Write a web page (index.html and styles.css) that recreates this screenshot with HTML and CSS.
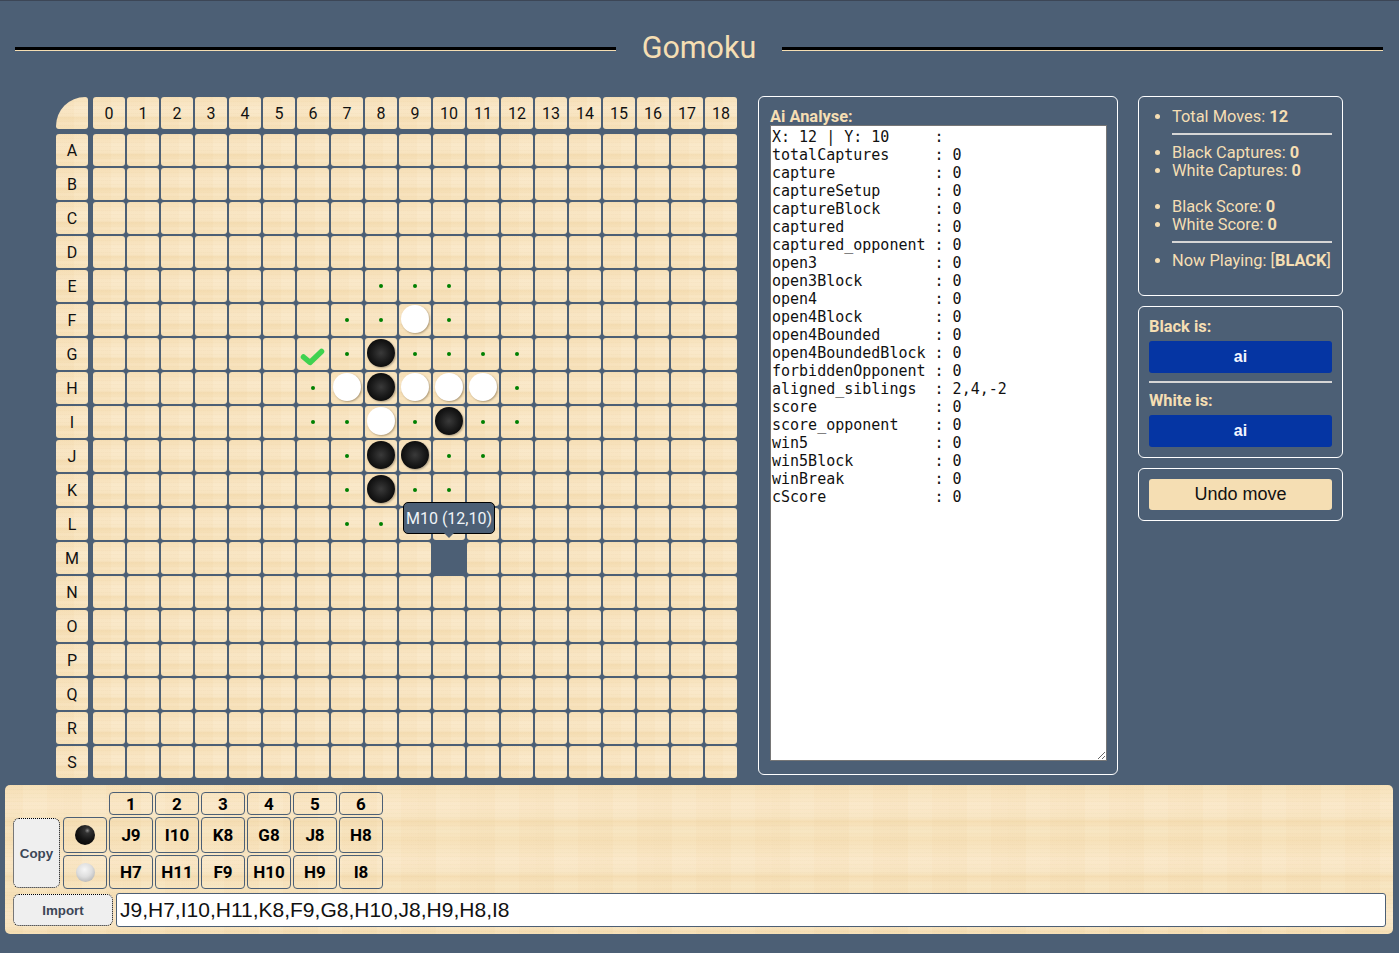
FILE: index.html
```html
<!DOCTYPE html>
<html lang="en">
<head>
    <meta charset="UTF-8">
    <meta name="viewport" content="width=device-width, initial-scale=1.0">
    <title>Gomoku</title>
    <link rel="stylesheet" href="styles.css">
</head>
<body>
    <header class="title-bar">
        <div class="title-line"></div>
        <h1>Gomoku</h1>
        <div class="title-line"></div>
    </header>

    <main class="game">
        <div class="board" id="board"></div>

        <section class="panel analyse">
            <label for="analyse-text">Ai Analyse:</label>
            <textarea id="analyse-text" spellcheck="false">X: 12 | Y: 10     :
totalCaptures     : 0
capture           : 0
captureSetup      : 0
captureBlock      : 0
captured          : 0
captured_opponent : 0
open3             : 0
open3Block        : 0
open4             : 0
open4Block        : 0
open4Bounded      : 0
open4BoundedBlock : 0
forbiddenOpponent : 0
aligned_siblings  : 2,4,-2
score             : 0
score_opponent    : 0
win5              : 0
win5Block         : 0
winBreak          : 0
cScore            : 0</textarea>
        </section>

        <aside class="side">
            <section class="panel stats">
                <ul>
                    <li>Total Moves: <b>12</b></li>
                    <li class="rule"><hr></li>
                    <li>Black Captures: <b>0</b></li>
                    <li>White Captures: <b>0</b></li>
                    <li class="blank"></li>
                    <li>Black Score: <b>0</b></li>
                    <li>White Score: <b>0</b></li>
                    <li class="rule"><hr></li>
                    <li>Now Playing: [<b>BLACK</b>]</li>
                </ul>
            </section>

            <section class="panel players">
                <div class="player-label">Black is:</div>
                <button class="player-btn">ai</button>
                <hr>
                <div class="player-label">White is:</div>
                <button class="player-btn">ai</button>
            </section>

            <section class="panel undo">
                <button class="undo-btn">Undo move</button>
            </section>
        </aside>
    </main>

    <section class="history wood">
        <div class="moves">
            <div class="move-num col-1">1</div>
            <div class="move-num">2</div>
            <div class="move-num">3</div>
            <div class="move-num">4</div>
            <div class="move-num">5</div>
            <div class="move-num">6</div>

            <button class="copy-btn">Copy</button>
            <div class="move stone-cell"><span class="mini black"></span></div>
            <div class="move">J9</div>
            <div class="move">I10</div>
            <div class="move">K8</div>
            <div class="move">G8</div>
            <div class="move">J8</div>
            <div class="move">H8</div>

            <div class="move stone-cell"><span class="mini white"></span></div>
            <div class="move">H7</div>
            <div class="move">H11</div>
            <div class="move">F9</div>
            <div class="move">H10</div>
            <div class="move">H9</div>
            <div class="move">I8</div>
        </div>
        <div class="import-row">
            <button class="import-btn">Import</button>
            <input class="import-input" type="text" value="J9,H7,I10,H11,K8,F9,G8,H10,J8,H9,H8,I8">
        </div>
    </section>

    <script src="script.js"></script>
</body>
</html>
```

FILE: styles.css
```css
:root {
    --page: #4c5f75;
    --wheat: #f5deb3;
    --wood-image:
        repeating-linear-gradient(180deg, rgba(222, 190, 140, 0.07) 0 1px, transparent 1px 4px),
        linear-gradient(90deg, rgba(240, 214, 168, 0.14) 0 30%, rgba(255, 245, 225, 0.06) 30% 72%, rgba(240, 214, 168, 0.1) 72% 100%),
        linear-gradient(180deg, rgba(248, 226, 188, 0.5) 0, rgba(252, 236, 210, 0.7) 35%, rgba(251, 235, 207, 0.6) 58%, rgba(244, 220, 178, 0.5) 66%, rgba(251, 234, 204, 0.55) 82%, rgba(247, 226, 188, 0.5) 100%);
}
* {
    box-sizing: border-box;
}
html, body {
    height: 100%;
}
body {
    margin: 0;
    background-color: var(--page);
    border-top: 1px solid #3c4656;
    font-family: Roboto, sans-serif;
    font-size: 16px;
    color: var(--wheat);
    overflow: hidden;
}
.wood {
    background-color: var(--wheat);
    background-image: var(--wood-image);
    background-size: 59px 55px;
}

/* title */
.title-bar {
    height: 95px;
    padding: 1px 16px 0 15px;
    display: flex;
    align-items: center;
}
.title-line {
    flex: 1;
    height: 4px;
    background: #000;
    border-bottom: 1px solid var(--wheat);
}
h1 {
    width: 166px;
    margin: -2px 0 0;
    font-size: 30.5px;
    font-weight: 400;
    line-height: 36px;
    text-align: center;
}

/* board */
.game {
    height: 689px;
    padding-left: 56px;
    display: flex;
    align-items: flex-start;
}
.board {
    margin-top: 1px;
    display: grid;
    grid-template-columns: 35px repeat(19, 32px);
    grid-template-rows: 35px repeat(19, 32px);
    gap: 2px;
}
.cell, .head {
    position: relative;
    width: 32px;
    height: 32px;
    border-radius: 3px;
    background-color: var(--wheat);
    background-image: var(--wood-image);
    background-size: 59px 32px;
}
.head {
    display: flex;
    align-items: center;
    justify-content: center;
    color: #111;
    font-size: 16px;
}
.corner {
    border-top-left-radius: 30px;
}
.cell.hover {
    background: transparent;
}
.dot {
    position: absolute;
    left: 14px;
    top: 14px;
    width: 4px;
    height: 4px;
    border-radius: 50%;
    background: #008000;
}
.stone {
    position: absolute;
    left: 2px;
    top: 1px;
    width: 28px;
    height: 28px;
    border-radius: 50%;
}
.stone.black {
    background: radial-gradient(circle at 50% 50%, #3a3a3a 0, #1c1c1c 45%, #050505 85%, #000 100%);
    box-shadow: 1px 1px 2px rgba(0, 0, 0, 0.3);
}
.stone.white {
    background: #fff;
    box-shadow: 1px 1px 2px rgba(90, 70, 40, 0.45);
}
.check {
    position: absolute;
    left: 0;
    top: 0;
    width: 32px;
    height: 32px;
}
.tooltip {
    position: absolute;
    left: -30px;
    top: -40px;
    width: 92px;
    height: 32px;
    z-index: 2;
    display: flex;
    align-items: center;
    justify-content: center;
    background: var(--page);
    border: 1px solid #000;
    border-radius: 5px;
    color: #f0f4f8;
    font-size: 16px;
    white-space: nowrap;
}
.tooltip::after {
    content: "";
    position: absolute;
    left: 40px;
    bottom: -5px;
    border-left: 5px solid transparent;
    border-right: 5px solid transparent;
    border-top: 5px solid var(--page);
}

/* panels */
.panel {
    border: 1px solid #fff;
    border-radius: 6px;
}
.analyse {
    width: 360px;
    height: 679px;
    margin-left: 21px;
    padding: 10px 0 0 11px;
}
.analyse label {
    display: block;
    height: 18px;
    font-size: 16.4px;
    font-weight: 700;
    line-height: 19px;
}
.analyse textarea {
    display: block;
    width: 337px;
    height: 636px;
    margin: 0;
    padding: 2px 2px 2px 1px;
    border: 1px solid #767676;
    border-radius: 0;
    background: #fff;
    color: #111;
    font-family: 'DejaVu Sans Mono', monospace;
    font-size: 15px;
    line-height: 18px;
    overflow: hidden;
    outline: none;
}
.side {
    width: 205px;
    margin-left: 20px;
    display: flex;
    flex-direction: column;
    gap: 10px;
}
.stats {
    height: 200px;
    padding-top: 10px;
}
.stats ul {
    margin: 0;
    padding: 0 10px 0 33px;
    font-size: 16.4px;
    line-height: 18px;
    white-space: nowrap;
}
.stats li {
    position: relative;
    top: 1px;
}
.stats li.rule, .stats li.blank {
    list-style: none;
    height: 18px;
    top: 0;
}
.stats li.rule {
    display: flex;
    align-items: center;
}
hr {
    width: 100%;
    height: 2px;
    margin: 0;
    border: 0;
    background: #d6d6d6;
}
.players {
    height: 152px;
    padding: 10px 10px 0;
}
.players hr {
    margin: 8px 0;
}
.player-label {
    height: 24px;
    font-size: 16.4px;
    font-weight: 700;
    line-height: 19px;
}
.player-btn {
    display: block;
    width: 100%;
    height: 32px;
    border: 0;
    border-radius: 3px;
    background: #0535a3;
    color: #f4f6ff;
    font-family: 'Liberation Sans', sans-serif;
    font-size: 16px;
    font-weight: 700;
}
.undo {
    height: 53px;
    padding: 10px;
}
.undo-btn {
    display: block;
    width: 100%;
    height: 31px;
    border: 0;
    border-radius: 3px;
    background: var(--wheat);
    color: #111;
    font-family: 'Liberation Sans', sans-serif;
    font-size: 18px;
}

/* move history */
.history {
    width: 1388px;
    height: 149px;
    margin-left: 5px;
    padding: 7px 7px 7px 8px;
    border-radius: 5px;
}
.moves {
    display: grid;
    grid-template-columns: 48px repeat(7, 44px);
    grid-template-rows: 23px 36px 34px;
    gap: 2px;
}
.move, .move-num {
    display: flex;
    align-items: center;
    justify-content: center;
    border: 1px solid var(--page);
    border-radius: 4px;
    color: #000;
    font-size: 17px;
    font-weight: 700;
}
.col-1 {
    grid-column: 3;
}
.copy-btn, .import-btn {
    border: 1px dotted #000;
    border-radius: 6px;
    background: #efefef;
    color: #3c4656;
    font-family: 'Liberation Sans', sans-serif;
    font-size: 13.33px;
    font-weight: 700;
    padding: 0;
}
.copy-btn {
    grid-row: 2 / 4;
    grid-column: 1;
    width: 47px;
    height: 70px;
    align-self: center;
}
.stone-cell {
    grid-column: 2;
}
.mini {
    width: 20px;
    height: 20px;
    border-radius: 50%;
}
.mini.black {
    background: radial-gradient(circle at 62% 28%, #8a8a8a 0, #333 14%, #151515 50%, #000 100%);
}
.mini.white {
    width: 19px;
    height: 19px;
    background: radial-gradient(circle at 45% 35%, #f6f6f6 0, #dedede 45%, #a2a2a2 100%);
}
.import-row {
    margin-top: 4px;
    display: flex;
    align-items: center;
    gap: 3px;
}
.import-btn {
    width: 100px;
    height: 32px;
}
.import-input {
    flex: 1;
    height: 34px;
    padding: 0 3px;
    border: 1px solid var(--page);
    border-radius: 3px;
    background: #fff;
    color: #111;
    font-family: 'Liberation Sans', sans-serif;
    font-size: 21px;
    outline: none;
}
```

FILE: script.js
```js
const letters = 'ABCDEFGHIJKLMNOPQRS';
const board = document.getElementById('board');

// row letter -> column -> what sits on that cell
const marks = {
    E: { 8: 'dot', 9: 'dot', 10: 'dot' },
    F: { 7: 'dot', 8: 'dot', 9: 'white', 10: 'dot' },
    G: { 6: 'check', 7: 'dot', 8: 'black', 9: 'dot', 10: 'dot', 11: 'dot', 12: 'dot' },
    H: { 6: 'dot', 7: 'white', 8: 'black', 9: 'white', 10: 'white', 11: 'white', 12: 'dot' },
    I: { 6: 'dot', 7: 'dot', 8: 'white', 9: 'dot', 10: 'black', 11: 'dot', 12: 'dot' },
    J: { 7: 'dot', 8: 'black', 9: 'black', 10: 'dot', 11: 'dot' },
    K: { 7: 'dot', 8: 'black', 9: 'dot', 10: 'dot' },
    L: { 7: 'dot', 8: 'dot' },
    M: { 10: 'hover' }
};

function addHead(text, extra) {
    const head = document.createElement('div');
    head.className = 'head' + (extra ? ' ' + extra : '');
    head.textContent = text;
    board.appendChild(head);
}

function addCell(mark) {
    const cell = document.createElement('div');
    cell.className = 'cell';
    if (mark === 'dot') {
        cell.innerHTML = '<span class="dot"></span>';
    } else if (mark === 'black' || mark === 'white') {
        cell.innerHTML = '<span class="stone ' + mark + '"></span>';
    } else if (mark === 'check') {
        cell.innerHTML = '<svg class="check" viewBox="0 0 32 32"><path d="M6.5 19 L13 24.5 L24.5 13.5" fill="none" stroke="#3fd24f" stroke-width="5.5" stroke-linecap="round" stroke-linejoin="round"/></svg>';
    } else if (mark === 'hover') {
        cell.classList.add('hover');
        cell.innerHTML = '<div class="tooltip">M10 (12,10)</div>';
    }
    board.appendChild(cell);
}

addHead('', 'corner');
for (let c = 0; c < 19; c++) {
    addHead(c);
}
for (const letter of letters) {
    addHead(letter);
    const row = marks[letter] || {};
    for (let c = 0; c < 19; c++) {
        addCell(row[c]);
    }
}
```
